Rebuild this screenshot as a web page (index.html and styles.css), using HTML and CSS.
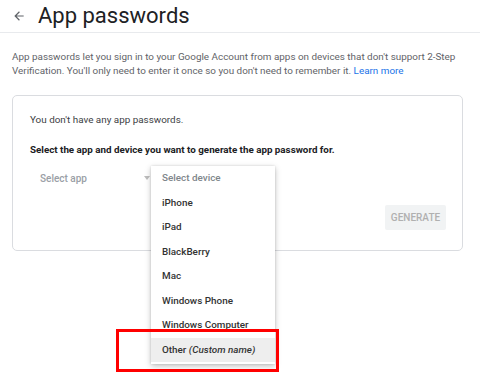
FILE: index.html
```html
<!DOCTYPE html>
<html>
<head>
<meta charset="utf-8">
<link rel="stylesheet" href="styles.css">
</head>
<body>
<header class="topbar">
  <svg class="back" viewBox="0 0 24 24" width="14" height="14"><path d="M20 11H7.83l5.59-5.59L12 4l-8 8 8 8 1.41-1.41L7.83 13H20v-2z" fill="#5f6368"/></svg>
  <h1 class="title">App passwords</h1>
</header>
<p class="intro">App passwords let you sign in to your Google Account from apps on devices that don't support 2-Step Verification. You'll only need to enter it once so you don't need to remember it. <a class="link">Learn more</a></p>
<section class="card">
  <p class="none">You don't have any app passwords.</p>
  <p class="prompt">Select the app and device you want to generate the app password for.</p>
  <div class="selects">
    <div class="select app">
      <span class="placeholder">Select app</span>
      <span class="caret"></span>
    </div>
    <div class="select device"></div>
  </div>
  <div class="actions">
    <button class="generate">GENERATE</button>
  </div>
</section>
<ul class="menu">
  <li class="item muted">Select device</li>
  <li class="item">iPhone</li>
  <li class="item">iPad</li>
  <li class="item">BlackBerry</li>
  <li class="item">Mac</li>
  <li class="item">Windows Phone</li>
  <li class="item">Windows Computer</li>
  <li class="item active">Other <em>(Custom name)</em></li>
</ul>
<div class="highlight"></div>
</body>
</html>
```

FILE: styles.css
```css
html, body {
  margin: 0;
  padding: 0;
  background: #fff;
  font-family: Roboto, "Liberation Sans", sans-serif;
  color: #202124;
}
.topbar {
  display: flex;
  align-items: center;
  height: 33px;
  padding-left: 12px;
  border-bottom: 1px solid #e8eaed;
  box-sizing: border-box;
}
.back {
  display: block;
  margin-right: 12px;
}
.title {
  margin: 0;
  font-size: 22px;
  font-weight: 400;
  line-height: 30px;
  color: #202124;
}
.intro {
  margin: 17px 20px 0 12px;
  font-size: 9.9px;
  line-height: 14px;
  color: #5f6368;
}
.link {
  color: #1a73e8;
}
.card {
  margin: 17px 17px 0 12px;
  border: 1px solid #dadce0;
  border-radius: 5px;
  padding: 17px 16px 20px 16px;
  display: flex;
  flex-direction: column;
}
.none {
  margin: 0 0 0 1px;
  font-size: 9.9px;
  line-height: 14px;
  color: #3c4043;
}
.prompt {
  margin: 16px 0 0 1px;
  font-size: 9.8px;
  line-height: 14px;
  font-weight: 700;
  color: #202124;
}
.selects {
  display: flex;
  margin-top: 9px;
  height: 24px;
  align-items: center;
}
.select {
  display: flex;
  align-items: center;
  font-size: 10px;
  font-weight: 500;
  color: #9aa0a6;
}
.select.app {
  width: 110px;
  padding-left: 11px;
  justify-content: space-between;
}
.caret {
  width: 0;
  height: 0;
  border-left: 3.5px solid transparent;
  border-right: 3.5px solid transparent;
  border-top: 4px solid #bdbdbd;
}
.select.device {
  margin-left: 17px;
  width: 110px;
}
.actions {
  display: flex;
  justify-content: flex-end;
  margin-top: 15px;
}
.generate {
  border: 0;
  background: #f1f3f4;
  color: #b0b0b0;
  font-family: inherit;
  font-size: 10px;
  font-weight: 500;
  height: 25px;
  width: 61px;
  padding: 0;
  border-radius: 2px;
}
.menu {
  position: absolute;
  left: 151px;
  top: 166px;
  width: 124px;
  margin: 0;
  padding: 0 0 2px 0;
  list-style: none;
  background: #fff;
  box-shadow: 0 2px 6px rgba(0,0,0,0.25), 0 0 2px rgba(0,0,0,0.12);
}
.item {
  height: 24.5px;
  line-height: 24.5px;
  padding-left: 11px;
  font-size: 9.9px;
  font-weight: 500;
  color: #333;
}
.item.muted {
  color: #80868b;
}
.item.active {
  background: #eeeeee;
}
.item em {
  font-style: italic;
}
.highlight {
  position: absolute;
  left: 116px;
  top: 329px;
  width: 157px;
  height: 37px;
  border: 3px solid #ff0000;
}
```
